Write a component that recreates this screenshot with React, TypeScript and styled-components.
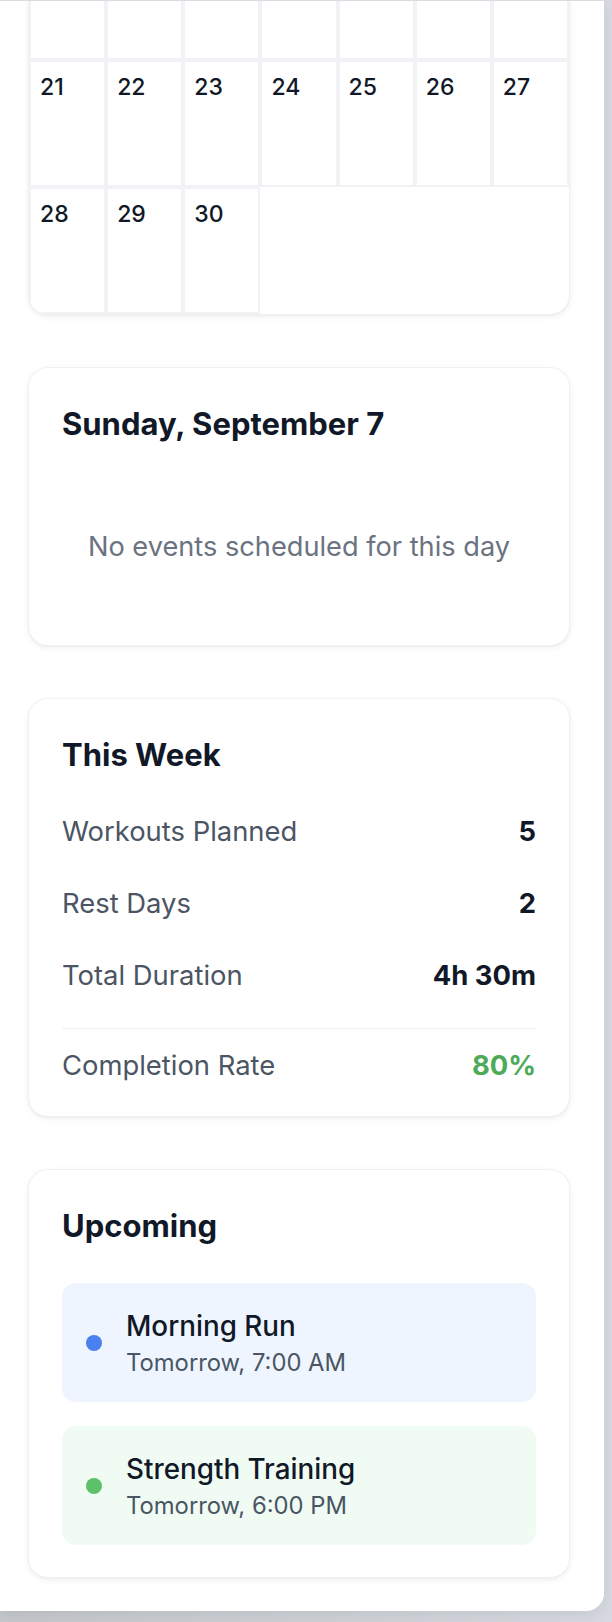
import React from "react";
import styled, { createGlobalStyle } from "styled-components";

const GlobalStyle = createGlobalStyle`
  html, body {
    margin: 0;
    padding: 0;
  }
  body {
    background: linear-gradient(90deg, #c4c7cc 0%, #d6dae0 100%);
    font-family: Inter, "Noto Sans", "Liberation Sans", sans-serif;
    color: #111827;
    -webkit-font-smoothing: antialiased;
  }
  * { box-sizing: border-box; }
`;

const Page = styled.div`
  width: 612px;
  min-height: 1622px;
  padding-bottom: 11px;
`;

const Panel = styled.main`
  width: 604px;
  background: #ffffff;
  border-top: 1px solid #d9dce1;
  border-bottom-right-radius: 18px;
  overflow: hidden;
  box-shadow: 0 4px 14px rgba(15, 23, 42, 0.08);
`;

const Content = styled.div`
  display: flex;
  flex-direction: column;
  gap: 52px;
  padding: 0 34px 33px 28px;
`;

const Card = styled.section`
  background: #ffffff;
  border: 1px solid #f0f1f3;
  border-radius: 20px;
  box-shadow: 0 2px 6px rgba(17, 24, 39, 0.06), 0 1px 2px rgba(17, 24, 39, 0.03);
`;

/* The calendar continues above the visible area (page is scrolled), so its top edge is not shown */
const CalendarCard = styled(Card)`
  overflow: hidden;
  border-top: none;
  border-radius: 0 0 20px 20px;
`;

const DayGrid = styled.div`
  display: grid;
  grid-template-columns: repeat(7, 1fr);
  grid-template-rows: 59px repeat(2, 127px);
`;

const DayCell = styled.div<{ $cutTop?: boolean }>`
  border: 2px solid #f1f2f5;
  border-top-width: ${(p) => (p.$cutTop ? 0 : 2)}px;
  padding: 10px 9px;
  font-size: 23px;
  line-height: 30px;
  font-weight: 500;
  color: #111827;
  background: #ffffff;
`;

const SectionCard = styled(Card)`
  padding: 32px 33px;
`;

const CardTitle = styled.h3`
  margin: 0 0 33px;
  font-size: 31px;
  line-height: 48px;
  font-weight: 700;
  color: #111827;
`;

const EmptyState = styled.p`
  margin: 0;
  padding: 47px 0;
  text-align: center;
  font-size: 27.2px;
  line-height: 38px;
  color: #6b7280;
`;

const StatList = styled.div`
  display: flex;
  flex-direction: column;
  gap: 34px;
`;

const StatRow = styled.div<{ $divider?: boolean }>`
  display: flex;
  justify-content: space-between;
  align-items: center;
  font-size: 27.4px;
  line-height: 38px;
  ${(p) =>
    p.$divider
      ? `border-top: 1px solid #eef0f2; padding-top: 17px;`
      : ""}
`;

const StatLabel = styled.span`
  color: #4b5563;
`;

const StatValue = styled.span<{ $accent?: string }>`
  font-weight: 700;
  color: ${(p) => p.$accent || "#111827"};
`;

const EventList = styled.div`
  display: flex;
  flex-direction: column;
  gap: 24px;
`;

const EventItem = styled.div<{ $bg: string }>`
  display: flex;
  align-items: center;
  gap: 24px;
  padding: 23px 24px;
  border-radius: 14px;
  background: ${(p) => p.$bg};
`;

const Dot = styled.span<{ $color: string }>`
  flex: none;
  width: 16px;
  height: 16px;
  border-radius: 50%;
  background: ${(p) => p.$color};
`;

const EventText = styled.div`
  display: flex;
  flex-direction: column;
`;

const EventTitle = styled.span`
  font-size: 27.8px;
  line-height: 40px;
  font-weight: 500;
  color: #111827;
`;

const EventTime = styled.span`
  font-size: 23.8px;
  line-height: 33px;
  color: #4b5563;
`;

// Visible part of the September grid: end of the 14–20 week, then 21–27 and 28–30
const visibleDays: { day: number | null; cutTop?: boolean }[] = [
  ...Array.from({ length: 7 }, () => ({ day: null, cutTop: true })),
  ...Array.from({ length: 10 }, (_, i) => ({ day: 21 + i })),
];

const stats = [
  { label: "Workouts Planned", value: "5" },
  { label: "Rest Days", value: "2" },
  { label: "Total Duration", value: "4h 30m" },
];

const events = [
  { title: "Morning Run", time: "Tomorrow, 7:00 AM", bg: "#eef5fe", dot: "#4b80f0" },
  { title: "Strength Training", time: "Tomorrow, 6:00 PM", bg: "#f0fcf3", dot: "#5cc169" },
];

export default function App() {
  return (
    <>
      <GlobalStyle />
      <Page>
        <Panel>
          <Content>
            <CalendarCard>
              <DayGrid>
                {visibleDays.map((d, i) => (
                  <DayCell key={i} $cutTop={d.cutTop}>
                    {d.day ?? ""}
                  </DayCell>
                ))}
              </DayGrid>
            </CalendarCard>

            <SectionCard>
              <CardTitle>Sunday, September 7</CardTitle>
              <EmptyState>No events scheduled for this day</EmptyState>
            </SectionCard>

            <SectionCard>
              <CardTitle>This Week</CardTitle>
              <StatList>
                {stats.map((s) => (
                  <StatRow key={s.label}>
                    <StatLabel>{s.label}</StatLabel>
                    <StatValue>{s.value}</StatValue>
                  </StatRow>
                ))}
                <StatRow $divider>
                  <StatLabel>Completion Rate</StatLabel>
                  <StatValue $accent="#4caa58">80%</StatValue>
                </StatRow>
              </StatList>
            </SectionCard>

            <SectionCard>
              <CardTitle>Upcoming</CardTitle>
              <EventList>
                {events.map((e) => (
                  <EventItem key={e.title} $bg={e.bg}>
                    <Dot $color={e.dot} />
                    <EventText>
                      <EventTitle>{e.title}</EventTitle>
                      <EventTime>{e.time}</EventTime>
                    </EventText>
                  </EventItem>
                ))}
              </EventList>
            </SectionCard>
          </Content>
        </Panel>
      </Page>
    </>
  );
}
